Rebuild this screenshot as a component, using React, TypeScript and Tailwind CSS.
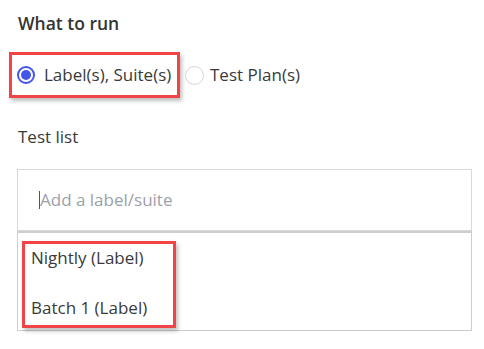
import React from 'react';

const font = { fontFamily: '"Open Sans", "Lato", sans-serif' };

function Radio({ checked }: { checked: boolean }) {
  return checked ? (
    <span className="flex h-[18px] w-[18px] shrink-0 items-center justify-center rounded-full border-[2px] border-[#4356e8] bg-white">
      <span className="h-[10px] w-[10px] rounded-full bg-[#4356e8]" />
    </span>
  ) : (
    <span className="h-[19px] w-[19px] shrink-0 rounded-full border border-[#d4d4dc] bg-white" />
  );
}

export default function App() {
  return (
    <div className="h-[349px] w-[484px] bg-white text-[#3a3a3a]" style={font}>
      <div className="pl-[18px] pt-[12px] text-[17.5px] font-semibold leading-[22px] text-[#333]">What to run</div>

      <div className="mt-[18px] flex items-center pl-[9px]">
        <div className="flex h-[46px] w-[171px] items-center gap-[9px] border-[3px] border-[#f24447] pl-[5px] shadow-[2px_3px_4px_rgba(0,0,0,0.25)]">
          <Radio checked />
          <span className="whitespace-nowrap text-[17px] leading-5">Label(s), Suite(s)</span>
        </div>
        <div className="ml-[5px] flex items-center gap-[6px]">
          <Radio checked={false} />
          <span className="whitespace-nowrap text-[17px] leading-5">Test Plan(s)</span>
        </div>
      </div>

      <div className="mt-[29px] pl-[18px] text-[17px] leading-5">Test list</div>

      <div className="ml-[17px] mt-[22px] w-[455px]">
        <div className="flex h-[62px] items-center border border-[#d8d8de] pl-[21px]">
          <span className="h-[18px] w-px bg-[#555]" />
          <span className="text-[17px] text-[#9ca1a9]">Add a label/suite</span>
        </div>
        <div className="h-[100px] border border-t-2 border-[#cdcdcd] pl-[4px] pt-[8px]">
          <div className="flex h-[87px] w-[154px] flex-col border-[3px] border-[#f24447] pl-[6px] shadow-[2px_3px_4px_rgba(0,0,0,0.25)]">
            <div className="whitespace-nowrap pt-[4px] text-[17px] leading-5">Nightly (Label)</div>
            <div className="whitespace-nowrap pt-[30px] text-[17px] leading-5">Batch 1 (Label)</div>
          </div>
        </div>
      </div>
    </div>
  );
}
